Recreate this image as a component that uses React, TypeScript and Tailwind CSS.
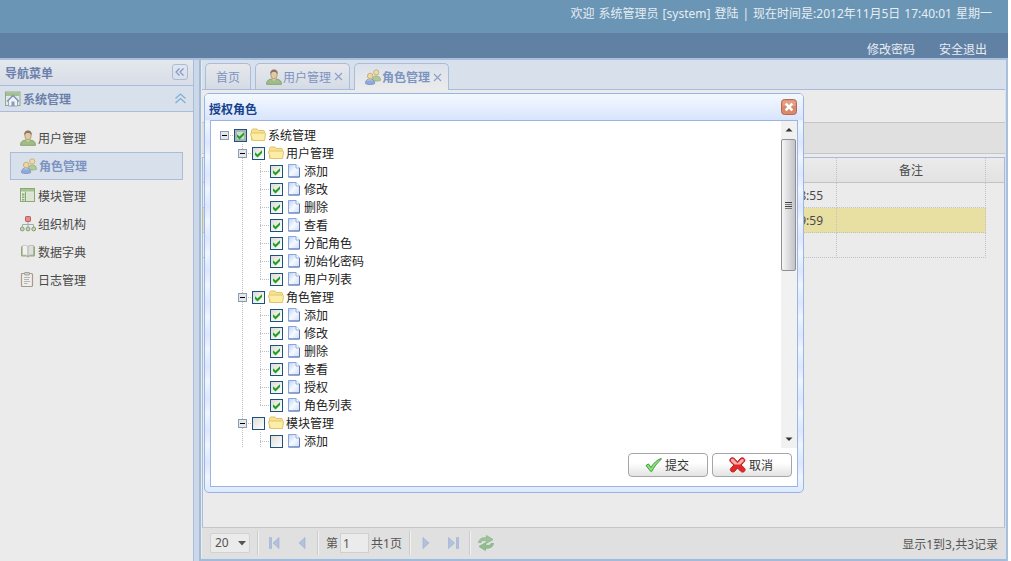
import { useState } from 'react'
import type { ReactNode } from 'react'

type NodeKind = 'root' | 'folder' | 'leaf'

interface TreeRow {
  kind: NodeKind
  label: string
  checked: boolean
  last?: boolean
}

const TREE_ROWS: TreeRow[] = [
  { kind: 'root', label: '系统管理', checked: true },
  { kind: 'folder', label: '用户管理', checked: true },
  { kind: 'leaf', label: '添加', checked: true },
  { kind: 'leaf', label: '修改', checked: true },
  { kind: 'leaf', label: '删除', checked: true },
  { kind: 'leaf', label: '查看', checked: true },
  { kind: 'leaf', label: '分配角色', checked: true },
  { kind: 'leaf', label: '初始化密码', checked: true },
  { kind: 'leaf', label: '用户列表', checked: true, last: true },
  { kind: 'folder', label: '角色管理', checked: true },
  { kind: 'leaf', label: '添加', checked: true },
  { kind: 'leaf', label: '修改', checked: true },
  { kind: 'leaf', label: '删除', checked: true },
  { kind: 'leaf', label: '查看', checked: true },
  { kind: 'leaf', label: '授权', checked: true },
  { kind: 'leaf', label: '角色列表', checked: true, last: true },
  { kind: 'folder', label: '模块管理', checked: false },
  { kind: 'leaf', label: '添加', checked: false },
]

function UserIcon() {
  return (
    <svg width="16" height="16" viewBox="0 0 16 16" className="shrink-0">
      <path d="M.6 15.3c-.3-3 1.4-4.6 4.6-5.2h5.6c3.200.6 4.900 2.200 4.600 5.200z" fill="#9fbd84" stroke="#86a470" />
      <path d="M5.500 9.500 8 12l2.500-2.500z" fill="#e4d0ac" />
      <ellipse cx="8" cy="5.800" rx="3.200" ry="4" fill="#e3c9a2" stroke="#a78a68" strokeWidth=".7" />
      <path d="M4.300 5.600C3.800 1.900 5.600.4 8 .4s4.200 1.500 3.700 5.200C10.900 3.500 9.600 3.100 8 3.100s-2.900.4-3.700 2.500z" fill="#8d7564" />
    </svg>
  )
}

function GroupIcon() {
  return (
    <svg width="16" height="16" viewBox="0 0 16 16" className="shrink-0">
      <path d="M7.500 11.500c0-3 1.200-4.500 3.700-4.500s4.300 1.200 4.300 4.300c-2 1-5.500 1-8 .2z" fill="#b1ca98" stroke="#90ad79" strokeWidth=".8" />
      <circle cx="11.200" cy="3.400" r="2.600" fill="#f1dba5" stroke="#bfa670" strokeWidth=".8" />
      <path d="M.5 14.600c0-3.100 1.500-4.600 4.500-4.600s4.700 1.500 4.700 4.600c-2 1.300-7.200 1.300-9.200 0z" fill="#8ea9dc" stroke="#7891c4" strokeWidth=".8" />
      <path d="M2.500 11.500c1.500-1 3.500-1 5 0" fill="none" stroke="#c3d3f0" />
      <circle cx="5.200" cy="7" r="2.800" fill="#f1d797" stroke="#bfa670" strokeWidth=".8" />
    </svg>
  )
}

function ModuleIcon() {
  return (
    <svg width="16" height="16" viewBox="0 0 16 16" className="shrink-0">
      <rect x=".5" y=".5" width="14" height="13" fill="#e3ecd9" stroke="#8aa878" />
      <path d="M1 1h13v2.500H1z" fill="#a5c290" />
      <path d="M5.500 3.500v10" stroke="#8aa878" />
      <path d="M2 5.500h2.500v2H2zM2 8.500h2.500v1.500H2zM2 11h2.500v1.500H2z" fill="#8fae7c" />
      <path d="M6.500 4.500H14V13H6.500z" fill="#dbe5d3" />
    </svg>
  )
}

function OrgIcon() {
  return (
    <svg width="16" height="16" viewBox="0 0 16 16" className="shrink-0">
      <path d="M8 6v5M2.500 11V8.500h11V11" fill="none" stroke="#a3acb5" />
      <rect x="5.500" y=".5" width="5" height="5" rx=".8" fill="#e08d8d" stroke="#bd5a5a" />
      <circle cx="2.300" cy="13" r="1.900" fill="#c5d8b4" stroke="#7b9669" strokeWidth=".9" />
      <circle cx="8" cy="13" r="1.900" fill="#c5d8b4" stroke="#7b9669" strokeWidth=".9" />
      <circle cx="13.700" cy="13" r="1.900" fill="#c5d8b4" stroke="#7b9669" strokeWidth=".9" />
    </svg>
  )
}

function BookIcon() {
  return (
    <svg width="16" height="16" viewBox="0 0 16 16" className="shrink-0">
      <path d="M1.500 2.500v9.500h5l1.500 1 1.500-1h5V2.500" fill="#a8bd92" stroke="#93aa7d" />
      <path d="M2.500 1.500C5 1.200 7 1.500 8 2.500v9.500c-1.500-1-3.500-1.200-5.500-1z" fill="#f1f2f0" stroke="#b5bab0" strokeWidth=".7" />
      <path d="M13.500 1.500C11 1.200 9 1.500 8 2.500v9.500c1.500-1 3.500-1.200 5.500-1z" fill="#dcdfda" stroke="#a8aea4" strokeWidth=".7" />
    </svg>
  )
}

function ClipboardIcon() {
  return (
    <svg width="16" height="16" viewBox="0 0 16 16" className="shrink-0">
      <rect x="1.500" y="1.500" width="11" height="13" rx="1" fill="#f0eeeb" stroke="#a99988" strokeWidth="1.200" />
      <rect x="4.500" y=".5" width="5" height="2.500" rx=".6" fill="#cfd0d2" stroke="#96918b" strokeWidth=".8" />
      <path d="M4 5.500h6M4 7.500h5M4 9.500h6M4 11.500h3.500" stroke="#b5b5b5" />
    </svg>
  )
}

function HomeIcon() {
  return (
    <svg width="16" height="16" viewBox="0 0 16 16" className="shrink-0">
      <rect x=".5" y="1" width="14.500" height="13.500" fill="#dfe8ee" stroke="#8fa98b" />
      <path d="M1 1.500h13.500V5H1z" fill="#a3c08f" />
      <path d="M3.500 9.500 8 5l4.500 4.500V15h-9z" fill="#eef2f6" stroke="#8797ac" strokeWidth=".8" />
      <path d="M2 10.500 8 4.500l6 6" fill="none" stroke="#7f93b1" strokeWidth="1.300" />
      <path d="M6.500 10.500h3V15h-3z" fill="#8a9cb7" />
    </svg>
  )
}

function FolderIcon() {
  return (
    <svg width="16" height="14" viewBox="0 0 16 14" className="shrink-0">
      <path d="M1.500 12.500v-10l1-1.500H7l1.500 1.500H14l.5 1v2" fill="#f7e28f" stroke="#dcc26c" />
      <path d="M2.500 12.500.5 6c0-.7.4-1 1-1H14.500c.7 0 1 .3 1 1l-1 6.500z" fill="#fbeda6" stroke="#dfc56f" />
    </svg>
  )
}

function FileIcon() {
  return (
    <svg width="16" height="14" viewBox="0 0 16 14" className="shrink-0">
      <defs>
        <linearGradient id="page" x1="0" y1="0" x2="1" y2="1">
          <stop offset="0" stopColor="#b9cff4" />
          <stop offset=".5" stopColor="#f6faff" />
          <stop offset="1" stopColor="#c9dafa" />
        </linearGradient>
      </defs>
      <path d="M.5.5H8L11.500 4v9H.5z" fill="url(#page)" stroke="#8ba5d6" />
      <path d="M8 .5V4h3.500" fill="#fff" stroke="#7f9bd0" strokeWidth=".8" />
      <path d="M11.500 4v9H.5" fill="none" stroke="#5f7ab3" />
    </svg>
  )
}

function RefreshIcon() {
  return (
    <svg width="18" height="18" viewBox="0 0 18 18">
      <path d="M1.500 8.500C2 5 5.500 3 9.500 4V1.500l6.500 4-6.500 3.800V7C6.500 6 4.500 6.500 4 8.500z" fill="#9ac596" stroke="#86b084" strokeWidth=".7" />
      <path d="M16.500 9.500C16 13 12.500 15 8.500 14v2.500L2 12.500l6.500-3.800V11c3 1 5 .5 5.500-1.500z" fill="#93bf90" stroke="#7ea97c" strokeWidth=".7" />
    </svg>
  )
}

// dotted connector lines of the tree, one 18px cell each
function Connector({ down, across, full = true, from = 8 }: { down?: boolean; across?: boolean; full?: boolean; from?: number }) {
  return (
    <svg width="18" height="18" viewBox="0 0 18 18" className="shrink-0" shapeRendering="crispEdges">
      {down && <line x1="8.500" y1="0" x2="8.500" y2={full ? 18 : 9} stroke="#bcbcbc" strokeDasharray="1 1" />}
      {across && <line x1={from} y1="9.500" x2="18" y2="9.500" stroke="#bcbcbc" strokeDasharray="1 1" />}
    </svg>
  )
}

function Expander({ root }: { root: boolean }) {
  return (
    <button type="button" aria-label="折叠" className="grid shrink-0">
      <span className="col-start-1 row-start-1">
        <Connector across down={!root} from={14} />
      </span>
      <svg width="18" height="18" viewBox="0 0 18 18" className="col-start-1 row-start-1" shapeRendering="crispEdges">
        <rect x="4.500" y="5.500" width="8" height="8" fill="#e4e7eb" stroke="#8e9cb3" />
        <path d="M6 9.500h5" stroke="#000" />
      </svg>
    </button>
  )
}

function TreeItem({ row, onToggle }: { row: TreeRow; onToggle: () => void }) {
  const isRoot = row.kind === 'root'
  const isLeaf = row.kind === 'leaf'
  return (
    <li className="flex h-[18px] items-center">
      {!isRoot && <Connector />}
      {isLeaf && <Connector down />}
      {isLeaf ? <Connector down across full={!row.last} /> : <Expander root={isRoot} />}
      <label className="flex h-[18px] items-center whitespace-nowrap">
        <span className="mr-[3px] grid">
          <input
            type="checkbox"
            checked={row.checked}
            onChange={onToggle}
            className={`col-start-1 row-start-1 size-[13px] appearance-none border border-[#1c5180] ${
              isRoot ? 'bg-[#a9b5b5]' : 'bg-linear-to-br from-[#dcdcd7] to-white'
            }`}
          />
          {row.checked && (
            <svg width="13" height="13" viewBox="0 0 13 13" className="pointer-events-none col-start-1 row-start-1">
              {isRoot && <path d="M3 3h7v7H3z" fill="#d3dcd3" />}
              <path d="M3 5.200 5.500 7.600 10 3.200v2.900L5.500 10.400 3 8z" fill="#21a121" />
            </svg>
          )}
        </span>
        <span className="w-[18px]">{isLeaf ? <span className="ml-[2px] block w-4"><FileIcon /></span> : <FolderIcon />}</span>
        <span className="pt-[2px]">{row.label}</span>
      </label>
    </li>
  )
}

function AuthorizeDialog() {
  const [rows, setRows] = useState(TREE_ROWS)

  const toggle = (index: number) => {
    setRows(rows.map((r, i) => (i === index ? { ...r, checked: !r.checked } : r)))
  }

  return (
    <div
      role="dialog"
      aria-labelledby="dialog-title"
      className="absolute top-[93px] left-[204px] w-[600px] rounded-[5px] border border-[#9ab5e0] bg-[repeating-linear-gradient(#eef4ff_0px,#dbe7ff_16px,#e4edff_24px,#f1f7ff_32px)] px-[5px] pb-[5px]"
    >
      <div className="-mx-[5px] flex h-[26px] items-center justify-between rounded-t-[4px] bg-linear-to-b from-[#f1f7ff] from-10% via-[#e3edff] via-60% to-[#d8e4fc] pr-[6px] pl-1">
        <h2 id="dialog-title" className="pt-[6px] text-xs font-bold text-[#15428b]">授权角色</h2>
        <button type="button" aria-label="关闭">
          <svg width="16" height="16" viewBox="0 0 16 16">
            <rect x=".5" y=".5" width="15" height="15" rx="3" fill="#d98a6c" stroke="#b9664a" />
            <path d="M1.500 3c0-1 .5-1.500 1.500-1.500h10c1 0 1.500.5 1.500 1.500v4h-13z" fill="#e3a083" />
            <path d="m4.700 4.700 6.600 6.600m0-6.600-6.600 6.600" stroke="#fff" strokeWidth="2.600" />
          </svg>
        </button>
      </div>
      <div className="border border-[#9ab5e0] bg-white">
        <div className="flex h-[327px]">
          <ul className="min-w-0 flex-1 overflow-hidden pt-[5px] pl-[5px] text-xs text-[#222]">
            {rows.map((row, i) => (
              <TreeItem key={i} row={row} onToggle={() => toggle(i)} />
            ))}
          </ul>
          <div className="flex w-4 flex-col items-center bg-[#f1f1f1]">
            <svg width="16" height="18" viewBox="0 0 16 18" className="shrink-0">
              <path d="m4.500 10.500 3.500-3.500 3.500 3.500z" fill="#333" />
            </svg>
            <div className="flex h-[132px] w-[15px] flex-col items-center justify-center gap-px self-start rounded-[2px] border border-[#8f8f8f] bg-linear-to-r from-[#f6f6f6] via-[#dcdcde] to-[#c3c4c8]">
              <span className="h-px w-[7px] bg-[#444]" />
              <span className="h-px w-[7px] bg-[#777]" />
              <span className="h-px w-[7px] bg-[#444]" />
              <span className="h-px w-[7px] bg-[#777]" />
            </div>
            <svg width="16" height="18" viewBox="0 0 16 18" className="mt-auto shrink-0">
              <path d="m4.500 7.500 3.500 3.500 3.500-3.500z" fill="#333" />
            </svg>
          </div>
        </div>
        <div className="flex justify-end gap-1 px-[5px] pt-[5px] pb-[9px]">
          <DialogButton label="提交">
            <path d="M1 8.500 3.500 7l2.500 3.500C8.500 6 12 3 16 1.500c.4 0 .6.500.3.8C12 6 9 10 6.700 14.500c-.2.4-.7.4-.9 0z" fill="#8ce578" stroke="#3a9c33" />
          </DialogButton>
          <DialogButton label="取消">
            <path d="M1.500 1.500C3 .2 4.500.5 6 2.200l2.500 2.600L11 2c1.500-1.600 3-1.600 4.200-.3 1.200 1.300.8 2.500-.5 3.800L12 8l3 2.700c1.400 1.400 1.400 2.600.3 3.700-1.200 1.100-2.600.9-3.900-.4L8.500 11 6 13.900c-1.300 1.300-2.700 1.500-3.900.4-1.200-1.200-1.100-2.400.3-3.700L5 8 2 5.500C.6 4 .4 2.700 1.500 1.500z" fill="#e02a2a" stroke="#c01d1d" />
            <path d="M2.300 2.300C3.300 1.500 4.300 1.800 5.500 3.100l3 3.200 3-3.200c1-1.100 2-1.400 2.900-.6.8.8.4 1.700-.8 2.800L11.200 7.500H5.600L2.800 4.900C1.800 4 1.600 3 2.300 2.300z" fill="#f8b0b0" />
          </DialogButton>
        </div>
      </div>
    </div>
  )
}

function DialogButton({ label, children }: { label: string; children: ReactNode }) {
  return (
    <button
      type="button"
      className="flex h-6 w-20 items-center justify-center gap-[3px] rounded-[4px] border border-[#a6a6a6] bg-linear-to-b from-white from-40% to-[#e3e3e3] pr-[2px] text-xs text-[#333]"
    >
      <svg width="17" height="16" viewBox="0 0 17 16">{children}</svg>
      <span className="pt-[2px]">{label}</span>
    </button>
  )
}

const MENU: { label: string; icon: ReactNode }[] = [
  { label: '用户管理', icon: <UserIcon /> },
  { label: '角色管理', icon: <GroupIcon /> },
  { label: '模块管理', icon: <ModuleIcon /> },
  { label: '组织机构', icon: <OrgIcon /> },
  { label: '数据字典', icon: <BookIcon /> },
  { label: '日志管理', icon: <ClipboardIcon /> },
]

function Sidebar() {
  return (
    <aside className="flex w-[194px] shrink-0 flex-col border-r border-[#a9bcda] bg-[#ebebeb]">
      <div className="flex h-[26px] items-center justify-between border-b border-[#a9bcda] bg-linear-to-b from-[#e4e8ee] to-[#d8dde7] px-[5px]">
        <h2 className="pt-[2px] text-xs font-bold text-[#6b80ab]">导航菜单</h2>
        <button type="button" aria-label="收起" className="mb-[2px] rounded-[3px] border border-[#a9bcda]">
          <svg width="14" height="14" viewBox="0 0 14 14">
            <path d="M6.500 3.500 3 7l3.500 3.500M10.500 3.500 7 7l3.500 3.500" fill="none" stroke="#7f97c4" strokeWidth="1.200" />
          </svg>
        </button>
      </div>
      <div className="flex h-[26px] items-center gap-[2px] border-b border-[#a9bcda] bg-[#d8e0ec] px-[5px]">
        <HomeIcon />
        <h3 className="pt-[2px] text-xs font-bold text-[#6b80ab]">系统管理</h3>
        <button type="button" aria-label="折叠面板" className="ml-auto">
          <svg width="16" height="16" viewBox="0 0 16 16">
            <path d="m3.500 7.500 5-4.500 5 4.500M3.500 12l5-4.500 5 4.500" fill="none" stroke="#7fb0d4" strokeWidth="1.300" />
          </svg>
        </button>
      </div>
      <ul className="px-[10px] pt-3">
        {MENU.map((item) => {
          const active = item.label === '角色管理'
          return (
            <li key={item.label}>
              <a
                href="#"
                className={`flex h-7 items-center gap-[2px] pl-[10px] text-xs ${
                  active
                    ? 'mb-[2px] border border-[#a9bcda] bg-[#d8e0ec] font-bold text-[#7c94c0]'
                    : 'text-[#484848]'
                }`}
              >
                {item.icon}
                <span className="pt-[2px]">{item.label}</span>
              </a>
            </li>
          )
        })}
      </ul>
    </aside>
  )
}

function TabClose() {
  return (
    <button type="button" aria-label="关闭标签" className="ml-[2px]">
      <svg width="9" height="9" viewBox="0 0 9 9">
        <path d="m1 1 7 7M8 1 1 8" stroke="#8ba0c6" strokeWidth="1.100" />
      </svg>
    </button>
  )
}

function Tabs() {
  const idle = 'h-[26px] bg-linear-to-b from-[#e6e8ec] to-[#d5dbe6]'
  const base = 'flex items-center gap-px rounded-t-[5px] border border-b-0 border-[#a9bcda] text-xs text-[#7c94c0]'
  return (
    <div className="flex h-[30px] shrink-0 items-end gap-1 border-b border-[#a9bcda] bg-[#d8e0ec] px-[3px]">
      <div className={`${base} ${idle} px-[10px]`}>
        <a href="#" className="pt-[2px]">首页</a>
      </div>
      <div className={`${base} ${idle} pr-[6px] pl-[10px]`}>
        <UserIcon />
        <a href="#" className="pt-[2px]">用户管理</a>
        <TabClose />
      </div>
      <div className={`${base} -mb-px h-[27px] bg-linear-to-b from-[#dbe2ed] to-[#ebebeb] pr-[6px] pl-[10px] font-bold`}>
        <GroupIcon />
        <a href="#" className="pt-[2px]">角色管理</a>
        <TabClose />
      </div>
    </div>
  )
}

const LOGS = [
  { time: '8:55', selected: false },
  { time: '9:59', selected: true },
  { time: '', selected: false },
]

function DataGrid() {
  const line = 'border-r border-b border-dotted border-[#c2c2c2]'
  return (
    <div className="mt-[3px] flex-1 border border-b-0 border-[#a9bcda]">
      <table className="w-full table-fixed border-separate border-spacing-0 text-xs text-[#4a4a4a]">
        <colgroup>
          <col />
          <col className="w-[149px]" />
          <col className="w-[18px]" />
        </colgroup>
        <thead>
          <tr className="h-[25px] bg-linear-to-b from-[#ebebeb] to-[#e2e2e2]">
            <th className="border-r border-b border-[#c2c2c2] [border-right-style:dotted]" />
            <th className="border-r border-b border-[#c2c2c2] pt-[2px] font-normal [border-right-style:dotted]">备注</th>
            <th className="border-b border-[#c2c2c2]" />
          </tr>
        </thead>
        <tbody>
          {LOGS.map((log, i) => (
            <tr key={i} className="h-[25px]">
              <td className={`${line} pt-[2px] pr-[13px] text-right ${log.selected ? 'bg-[#e8dfa3]' : ''}`}>{log.time}</td>
              <td className={`${line} ${log.selected ? 'bg-[#e8dfa3]' : ''}`} />
              <td />
            </tr>
          ))}
        </tbody>
      </table>
    </div>
  )
}

function PagerButton({ label, children }: { label: string; children: ReactNode }) {
  return (
    <button type="button" aria-label={label} className="flex size-[27px] items-center justify-center">
      <svg width="12" height="12" viewBox="0 0 12 12" fill="#b3c1e0" stroke="#9bacd2" strokeWidth=".6">{children}</svg>
    </button>
  )
}

function Separator() {
  return <span className="h-6 w-[2px] border-l border-[#cbcbcb] bg-[#f2f2f2]" />
}

function Pager() {
  return (
    <div className="flex h-[31px] shrink-0 items-center border-t border-[#c6c6c6] bg-[#e0e0e0] pr-[7px] pl-2 text-xs text-[#555]">
      <div className="relative mr-[7px]">
        <select aria-label="每页条数" defaultValue="20" className="h-5 w-10 appearance-none rounded-[2px] border border-[#d2d2d2] bg-[#ebebeb] pl-1 text-xs">
          <option>20</option>
        </select>
        <svg width="8" height="5" viewBox="0 0 8 5" className="pointer-events-none absolute top-2 right-1">
          <path d="M0 0h8L4 4.500z" fill="#555" />
        </svg>
      </div>
      <Separator />
      <div className="flex px-[2px]">
        <PagerButton label="首页">
          <path d="M.5.5h2v11h-2zM10 .5v11L4 6z" />
        </PagerButton>
        <PagerButton label="上一页">
          <path d="M9 .5v11L3 6z" />
        </PagerButton>
      </div>
      <Separator />
      <label className="ml-[7px] flex items-center gap-[2px]">
        <span className="pt-[2px]">第</span>
        <input type="text" defaultValue="1" className="h-5 w-[29px] border border-[#cfcfcf] bg-[#ebebeb] pl-[2px] text-xs" />
      </label>
      <span className="mr-[7px] ml-[2px] pt-[2px]">共1页</span>
      <Separator />
      <div className="flex px-[2px]">
        <PagerButton label="下一页">
          <path d="M3 .5v11L9 6z" />
        </PagerButton>
        <PagerButton label="末页">
          <path d="M1.500.5v11l6-5.500zM9.500.5h2v11h-2z" />
        </PagerButton>
      </div>
      <Separator />
      <button type="button" aria-label="刷新" className="ml-[6px]">
        <RefreshIcon />
      </button>
      <span className="ml-auto pt-[4px]">显示1到3,共3记录</span>
    </div>
  )
}

export default function App() {
  return (
    <div className="relative flex h-screen flex-col bg-white pr-[3px] font-['Noto_Sans','Noto_Sans_CJK_SC',sans-serif]">
      <header className="shrink-0 text-xs text-[#e6edf3]">
        <div className="flex h-[33px] justify-end gap-1 bg-[#6a95b4] pt-[6px] pr-4">
          <span>欢迎</span>
          <span>系统管理员</span>
          <span>[system]</span>
          <span>登陆</span>
          <span>|</span>
          <span>现在时间是:2012年11月5日</span>
          <span>17:40:01</span>
          <span>星期一</span>
        </div>
        <nav className="flex h-[25px] items-end justify-end gap-6 bg-[#6181a4] pr-[21px]">
          <a href="#">修改密码</a>
          <a href="#">安全退出</a>
        </nav>
      </header>
      <div className="flex min-h-0 flex-1 border-t-2 border-r-2 border-[#a9bfdc] bg-[#ccd7e8]">
        <Sidebar />
        <main className="ml-[5px] flex min-w-0 flex-1 flex-col border-b-2 border-l-2 border-[#a3bbdb] bg-[#ebebeb]">
          <div className="flex min-h-0 flex-1 flex-col border-r border-b border-[#d8e0ec] pl-px">
            <Tabs />
            <div className="h-8 shrink-0" />
            <div className="h-8 shrink-0 border-y border-[#c6c6c6] bg-[#e0e0e0]" />
            <DataGrid />
            <Pager />
          </div>
        </main>
      </div>
      <AuthorizeDialog />
    </div>
  )
}
